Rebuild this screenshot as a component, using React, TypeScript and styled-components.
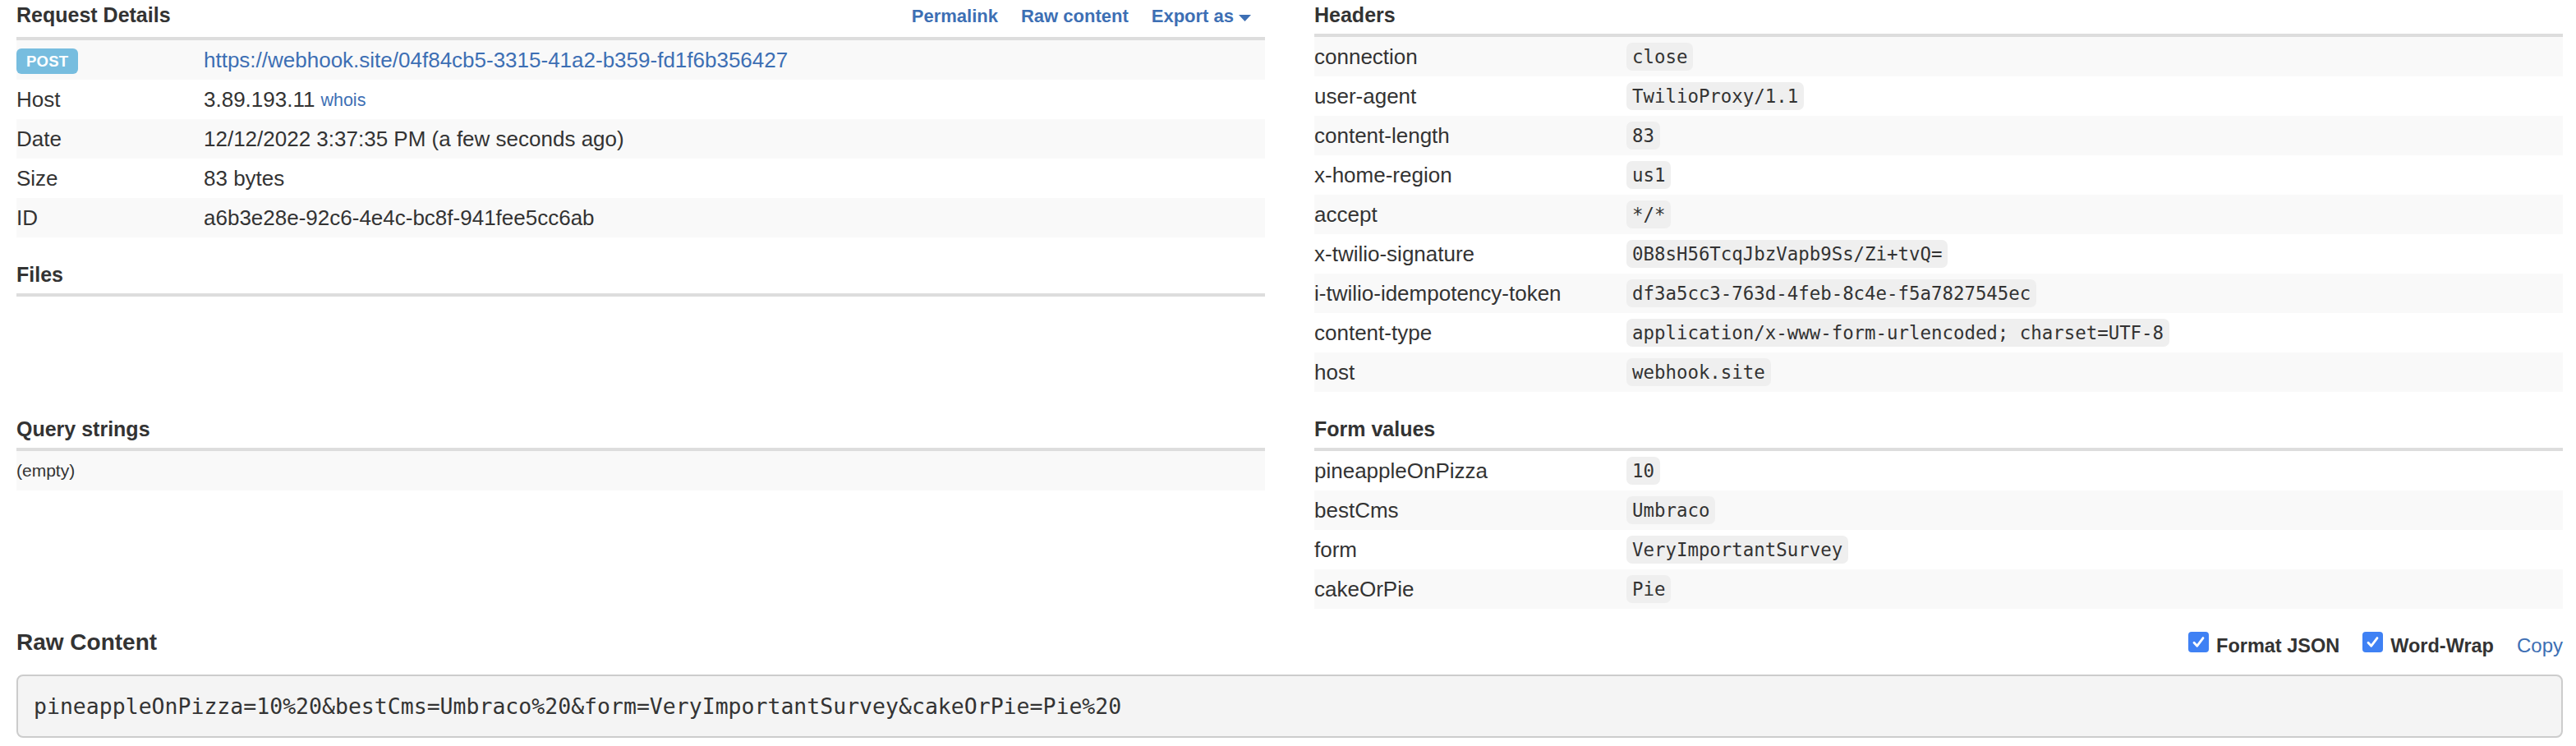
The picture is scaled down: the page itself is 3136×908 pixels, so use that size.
import React from 'react';
import styled, { createGlobalStyle } from 'styled-components';

const LINK = '#3d6fb4';
const TEXT = '#333333';

const GlobalStyle = createGlobalStyle`
  html, body { margin: 0; padding: 0; background: #ffffff; }
  body {
    font-family: "Liberation Sans", Arial, Helvetica, sans-serif;
    color: ${TEXT};
    -webkit-font-smoothing: antialiased;
  }
  * { box-sizing: border-box; }
`;

const Page = styled.div`
  width: 3136px;
  padding: 0 16px 0 20px;
`;

const Columns = styled.div`
  display: grid;
  grid-template-columns: 1520px 1520px;
  column-gap: 60px;
  align-items: start;
`;

const Column = styled.div`
  display: flex;
  flex-direction: column;
  gap: 27px;
`;

const Section = styled.section`
  display: flex;
  flex-direction: column;
`;

const SectionHeader = styled.div<{ $h: number }>`
  display: flex;
  align-items: flex-start;
  justify-content: space-between;
  height: ${(p) => p.$h + 4}px;
  border-bottom: 4px solid #dddddd;
`;

const Title = styled.h3`
  margin: 0;
  font-size: 25px;
  font-weight: 700;
  line-height: 36px;
  color: ${TEXT};
`;

const HeaderLinks = styled.div`
  display: flex;
  gap: 28px;
  margin-top: 2px;
  padding-right: 17px;
`;

const HeaderLink = styled.a`
  display: inline-flex;
  align-items: center;
  font-size: 22px;
  font-weight: 700;
  line-height: 36px;
  color: ${LINK};
  text-decoration: none;
`;

const Caret = styled.svg`
  margin-left: 6px;
  margin-top: 3px;
`;

const Row = styled.div<{ $label: number }>`
  display: grid;
  grid-template-columns: ${(p) => p.$label}px 1fr;
  align-items: center;
  height: 48px;
  font-size: 26px;
`;

const Table = styled.div<{ $stripe: 'odd' | 'even' }>`
  display: flex;
  flex-direction: column;
  & > ${Row}:nth-child(${(p) => p.$stripe}) {
    background: #f9f9f9;
  }
`;

const Cell = styled.div`
  display: flex;
  align-items: center;
  gap: 7px;
  white-space: nowrap;
`;

const Badge = styled.span`
  display: inline-flex;
  align-items: center;
  height: 31px;
  padding: 0 12px;
  margin-top: 3px;
  border-radius: 6px;
  background: #77bddf;
  color: #ffffff;
  font-size: 18.5px;
  font-weight: 700;
  letter-spacing: 0.2px;
`;

const UrlLink = styled.a`
  color: ${LINK};
  text-decoration: none;
  font-size: 26px;
`;

const SmallLink = styled.a`
  color: ${LINK};
  text-decoration: none;
  font-size: 21.5px;
  margin-top: 3px;
`;

const Code = styled.code`
  display: inline-block;
  height: 34px;
  line-height: 34px;
  padding: 0 7px;
  border-radius: 7px;
  background: #efefef;
  color: ${TEXT};
  font-family: "DejaVu Sans Mono", "Liberation Mono", monospace;
  font-size: 22.4px;
`;

const EmptyBody = styled.div`
  height: 116px;
`;

const EmptyText = styled.span`
  font-size: 21px;
`;

const RawSection = styled.section`
  margin-top: 21px;
  display: flex;
  flex-direction: column;
`;

const RawHeader = styled.div`
  display: flex;
  align-items: flex-start;
  justify-content: space-between;
  height: 40px;
`;

const RawTitle = styled.h2`
  margin: 0;
  font-size: 28px;
  font-weight: 700;
  line-height: 40px;
  color: ${TEXT};
`;

const Controls = styled.div`
  display: flex;
  align-items: center;
  height: 40px;
  margin-top: 4px;
`;

const CheckLabel = styled.label`
  display: flex;
  align-items: center;
  gap: 9px;
  margin-right: 28px;
  font-size: 23.5px;
  font-weight: 700;
  line-height: 40px;
  color: ${TEXT};
`;

const CheckBox = styled.span`
  display: flex;
  align-items: center;
  justify-content: center;
  width: 25px;
  height: 25px;
  margin-bottom: 9px;
  border-radius: 4px;
  background: #3f81f4;
`;

const CopyLink = styled.a`
  font-size: 24px;
  line-height: 40px;
  color: ${LINK};
  text-decoration: none;
`;

const RawBox = styled.pre`
  margin: 19px 0 0;
  height: 77px;
  display: flex;
  align-items: center;
  padding: 0 19px;
  border: 2px solid #cccccc;
  border-radius: 8px;
  background: #f4f4f4;
  color: ${TEXT};
  font-family: "DejaVu Sans Mono", "Liberation Mono", monospace;
  font-size: 26.5px;
  white-space: pre-wrap;
`;

type KV = [string, string];

const headers: KV[] = [
  ['connection', 'close'],
  ['user-agent', 'TwilioProxy/1.1'],
  ['content-length', '83'],
  ['x-home-region', 'us1'],
  ['accept', '*/*'],
  ['x-twilio-signature', '0B8sH56TcqJbzVapb9Ss/Zi+tvQ='],
  ['i-twilio-idempotency-token', 'df3a5cc3-763d-4feb-8c4e-f5a7827545ec'],
  ['content-type', 'application/x-www-form-urlencoded; charset=UTF-8'],
  ['host', 'webhook.site'],
];

const formValues: KV[] = [
  ['pineappleOnPizza', '10'],
  ['bestCms', 'Umbraco'],
  ['form', 'VeryImportantSurvey'],
  ['cakeOrPie', 'Pie'],
];

const Check = () => (
  <CheckBox>
    <svg width="17" height="17" viewBox="0 0 17 17">
      <path d="M3 9.2 L6.8 13.2 L14 3.6" fill="none" stroke="#ffffff" strokeWidth="2.8" strokeLinecap="round" strokeLinejoin="round" />
    </svg>
  </CheckBox>
);

export default function App() {
  return (
    <>
      <GlobalStyle />
      <Page>
        <Columns>
          <Column>
            <Section>
              <SectionHeader $h={45}>
                <Title>Request Details</Title>
                <HeaderLinks>
                  <HeaderLink href="#">Permalink</HeaderLink>
                  <HeaderLink href="#">Raw content</HeaderLink>
                  <HeaderLink href="#">
                    Export as
                    <Caret width="15" height="8" viewBox="0 0 15 8">
                      <path d="M0 0 H15 L7.5 8 Z" fill={LINK} />
                    </Caret>
                  </HeaderLink>
                </HeaderLinks>
              </SectionHeader>
              <Table $stripe="odd">
                <Row $label={228}>
                  <Cell>
                    <Badge>POST</Badge>
                  </Cell>
                  <Cell>
                    <UrlLink href="#">https://webhook.site/04f84cb5-3315-41a2-b359-fd1f6b356427</UrlLink>
                  </Cell>
                </Row>
                <Row $label={228}>
                  <Cell>Host</Cell>
                  <Cell>
                    3.89.193.11 <SmallLink href="#">whois</SmallLink>
                  </Cell>
                </Row>
                <Row $label={228}>
                  <Cell>Date</Cell>
                  <Cell>12/12/2022 3:37:35 PM (a few seconds ago)</Cell>
                </Row>
                <Row $label={228}>
                  <Cell>Size</Cell>
                  <Cell>83 bytes</Cell>
                </Row>
                <Row $label={228}>
                  <Cell>ID</Cell>
                  <Cell>a6b3e28e-92c6-4e4c-bc8f-941fee5cc6ab</Cell>
                </Row>
              </Table>
            </Section>

            <Section>
              <SectionHeader $h={41}>
                <Title>Files</Title>
              </SectionHeader>
              <EmptyBody />
            </Section>

            <Section>
              <SectionHeader $h={41}>
                <Title>Query strings</Title>
              </SectionHeader>
              <Table $stripe="odd">
                <Row $label={1520}>
                  <Cell>
                    <EmptyText>(empty)</EmptyText>
                  </Cell>
                </Row>
              </Table>
            </Section>
          </Column>

          <Column>
            <Section>
              <SectionHeader $h={41}>
                <Title>Headers</Title>
              </SectionHeader>
              <Table $stripe="odd">
                {headers.map(([k, v]) => (
                  <Row $label={380} key={k}>
                    <Cell>{k}</Cell>
                    <Cell>
                      <Code>{v}</Code>
                    </Cell>
                  </Row>
                ))}
              </Table>
            </Section>

            <Section>
              <SectionHeader $h={41}>
                <Title>Form values</Title>
              </SectionHeader>
              <Table $stripe="even">
                {formValues.map(([k, v]) => (
                  <Row $label={380} key={k}>
                    <Cell>{k}</Cell>
                    <Cell>
                      <Code>{v}</Code>
                    </Cell>
                  </Row>
                ))}
              </Table>
            </Section>
          </Column>
        </Columns>

        <RawSection>
          <RawHeader>
            <RawTitle>Raw Content</RawTitle>
            <Controls>
              <CheckLabel>
                <Check />
                Format JSON
              </CheckLabel>
              <CheckLabel>
                <Check />
                Word-Wrap
              </CheckLabel>
              <CopyLink href="#">Copy</CopyLink>
            </Controls>
          </RawHeader>
          <RawBox>pineappleOnPizza=10%20&amp;bestCms=Umbraco%20&amp;form=VeryImportantSurvey&amp;cakeOrPie=Pie%20</RawBox>
        </RawSection>
      </Page>
    </>
  );
}
